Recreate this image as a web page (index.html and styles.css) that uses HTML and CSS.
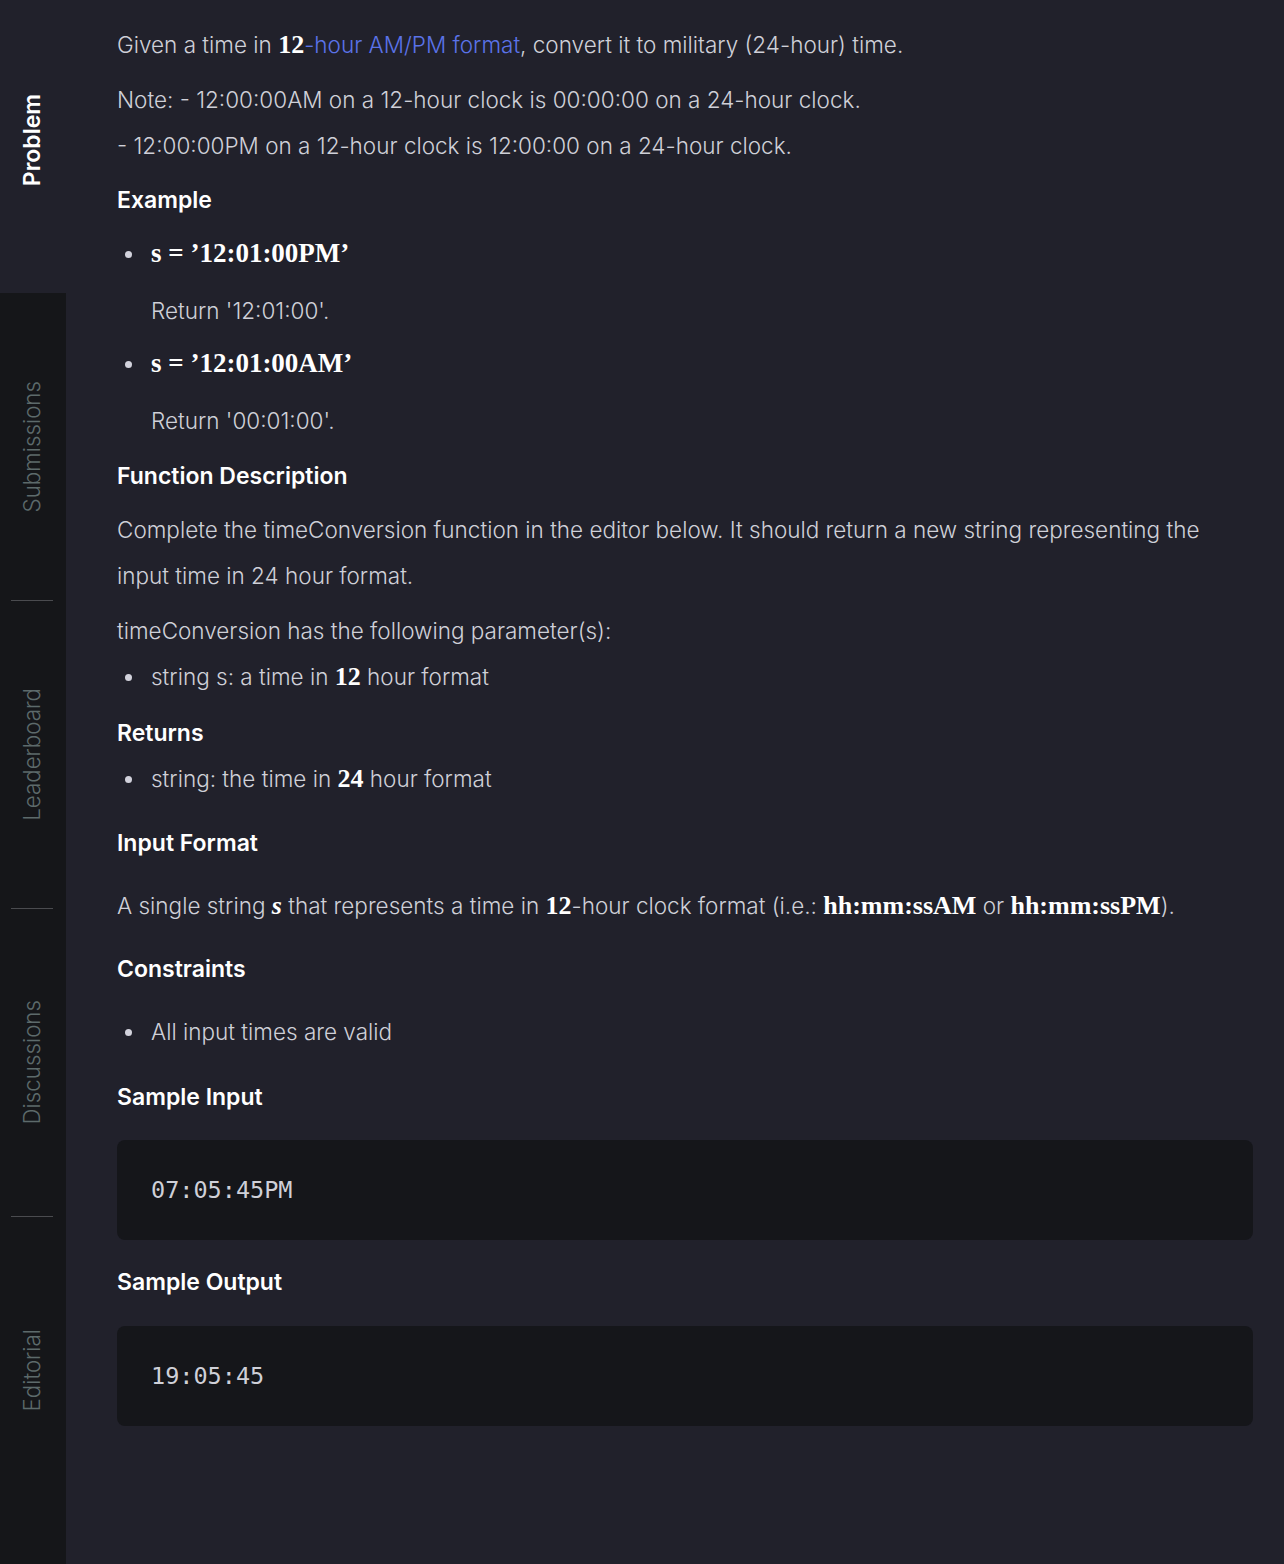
FILE: index.html
```html
<!DOCTYPE html>
<html lang="en">
<head>
<meta charset="utf-8">
<title>Time Conversion</title>
<link rel="stylesheet" href="styles.css">
</head>
<body>
<div class="page">
  <nav class="tabs">
    <div class="tab tab-active"><span class="tab-label">Problem</span></div>
    <div class="tab"><span class="tab-label">Submissions</span></div>
    <div class="sep"></div>
    <div class="tab"><span class="tab-label">Leaderboard</span></div>
    <div class="sep"></div>
    <div class="tab"><span class="tab-label">Discussions</span></div>
    <div class="sep"></div>
    <div class="tab tab-last"><span class="tab-label">Editorial</span></div>
  </nav>
  <main class="content">
    <p class="p g9">Given a time in <span class="m">12</span><a class="link" href="#">-hour AM/PM format</a>, convert it to military (24-hour) time.</p>
    <p class="p g8">Note: - 12:00:00AM on a 12-hour clock is 00:00:00 on a 24-hour clock.<br>- 12:00:00PM on a 12-hour clock is 12:00:00 on a 24-hour clock.</p>
    <h3 class="h g8">Example</h3>
    <ul class="list ex g9">
      <li class="item">
        <div class="mathline"><span class="mb">s = ’12:01:00PM’</span></div>
        <p class="ret">Return '12:01:00'.</p>
      </li>
      <li class="item">
        <div class="mathline"><span class="mb">s = ’12:01:00AM’</span></div>
        <p class="ret">Return '00:01:00'.</p>
      </li>
    </ul>
    <h3 class="h g8">Function Description</h3>
    <p class="p g9">Complete the timeConversion function in the editor below. It should return a new string representing the input time in 24 hour format.</p>
    <p class="p">timeConversion has the following parameter(s):</p>
    <ul class="list g10">
      <li class="item">string s: a time in <span class="m">12</span> hour format</li>
    </ul>
    <h3 class="h">Returns</h3>
    <ul class="list g18">
      <li class="item">string: the time in <span class="m">24</span> hour format</li>
    </ul>
    <h3 class="h g17">Input Format</h3>
    <p class="p g17">A single string <span class="mi">s</span> that represents a time in <span class="m">12</span>-hour clock format (i.e.: <span class="m">hh:mm:ssAM</span> or <span class="m">hh:mm:ssPM</span>).</p>
    <h3 class="h g17">Constraints</h3>
    <ul class="list g19">
      <li class="item">All input times are valid</li>
    </ul>
    <h3 class="h g20">Sample Input</h3>
    <pre class="code g19">07:05:45PM</pre>
    <h3 class="h g21">Sample Output</h3>
    <pre class="code">19:05:45</pre>
  </main>
</div>
</body>
</html>
```
FILE: styles.css
```css
html, body {
  margin: 0;
  padding: 0;
  background: #21212b;
}
.page {
  display: flex;
  width: 1284px;
  min-height: 1564px;
  font-family: "Inter", "Noto Sans", sans-serif;
}
.tabs {
  width: 66px;
  flex: none;
  display: flex;
  flex-direction: column;
  background: #151619;
}
.tab {
  height: 307px;
  display: flex;
  align-items: center;
  justify-content: center;
  padding-right: 2px;
  box-sizing: border-box;
}
.tab-active {
  height: 293px;
  background: #21212b;
  padding-bottom: 12px;
}
.tab-label {
  writing-mode: vertical-rl;
  transform: rotate(180deg);
  font-size: 22.3px;
  color: #5d6a6b;
  font-weight: 300;
  line-height: 1;
}
.tab-active .tab-label {
  color: #ffffff;
  font-weight: 600;
  font-size: 23px;
}
.sep {
  height: 1px;
  margin: 0 13px 0 11px;
  background: #4a4b4f;
  flex: none;
}
.content {
  flex: 1;
  padding: 22px 31px 40px 51px;
  color: #cfd0d8;
  font-size: 22.5px;
  line-height: 46px;
  font-weight: 300;
}
.p {
  margin: 0;
}
.h {
  margin: 0;
  font-size: 23px;
  font-weight: 600;
  color: #ffffff;
}
.g8 { margin-bottom: 8px; }
.g9 { margin-bottom: 9px; }
.g10 { margin-bottom: 10px; }
.g17 { margin-bottom: 17px; }
.g18 { margin-bottom: 18px; }
.g19 { margin-bottom: 19px; }
.g20 { margin-bottom: 20px; }
.g21 { margin-bottom: 21px; }
.link {
  color: #5b73e8;
  text-decoration: none;
}
.m {
  font-family: "Liberation Serif", "DejaVu Serif", serif;
  font-weight: 700;
  font-size: 26px;
  line-height: 1;
  color: #ffffff;
}
.mi {
  font-family: "Liberation Serif", "DejaVu Serif", serif;
  font-weight: 700;
  font-style: italic;
  font-size: 26px;
  line-height: 1;
  color: #ffffff;
}
.list {
  list-style: none;
  margin-top: 0;
  padding: 0 0 0 34px;
}
.item {
  position: relative;
}
.item::before {
  content: "";
  position: absolute;
  left: -26px;
  top: 20px;
  width: 7px;
  height: 7px;
  border-radius: 50%;
  background: #d2d2dc;
}
.ex .item {
  margin-bottom: 7px;
}
.ex .item:last-child {
  margin-bottom: 0;
}
.mathline {
  margin-bottom: 11px;
  height: 46px;
}
.mb {
  font-family: "Liberation Serif", "DejaVu Serif", serif;
  font-weight: 700;
  font-size: 27px;
  line-height: 1;
  color: #ffffff;
}
.ret {
  margin: 0;
}
.code {
  margin-top: 0;
  height: 100px;
  box-sizing: border-box;
  padding: 0 34px;
  display: flex;
  align-items: center;
  background: #15161a;
  border-radius: 8px;
  font-family: "DejaVu Sans Mono", "Liberation Mono", monospace;
  font-size: 23.5px;
  color: #cfd0d8;
  line-height: 46px;
}
.code:last-child {
  margin-bottom: 0;
}
```
